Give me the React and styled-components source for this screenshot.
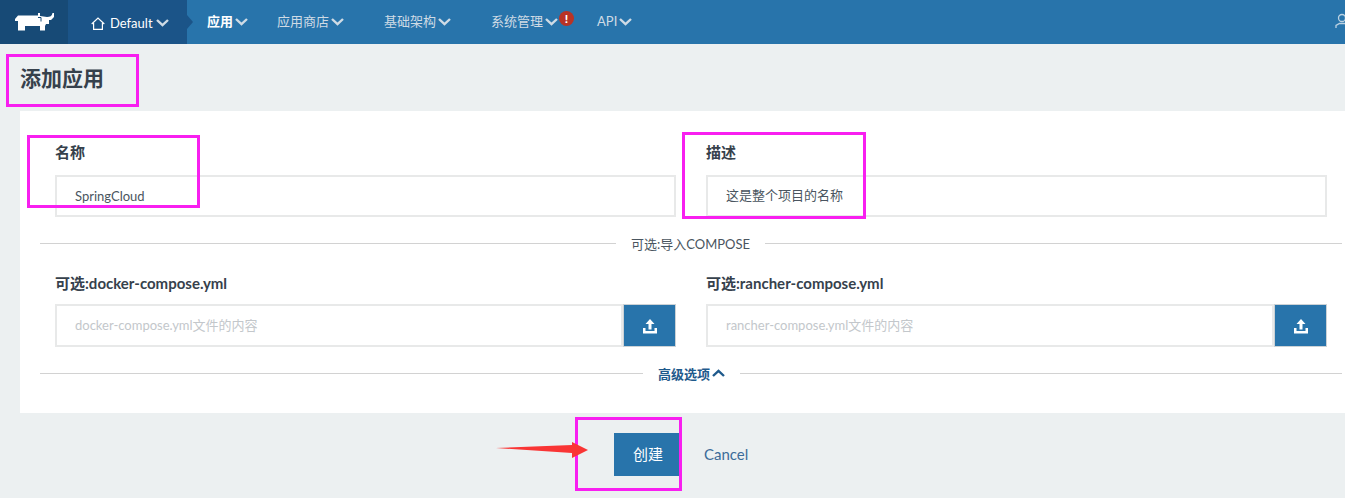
import React from 'react';
import styled, { createGlobalStyle } from 'styled-components';

const FONT = `Lato, "Noto Sans CJK SC", "Liberation Sans", sans-serif`;

const Global = createGlobalStyle`
  html, body { margin: 0; padding: 0; background: #ecf0f1; }
  body { font-family: ${FONT}; color: #3a4652; }
`;

const Page = styled.div`
  position: relative;
  width: 1345px;
  height: 498px;
  overflow: hidden;
  background: #ecf0f1;
`;

const Nav = styled.header`
  display: flex;
  align-items: stretch;
  height: 44px;
  background: #2874ab;
  font-size: 13px;
  color: #cfdbe5;
`;

const LogoCell = styled.div`
  width: 68px;
  display: flex;
  align-items: center;
  justify-content: center;
  background: #174a76;
`;

const EnvCell = styled.div`
  position: relative;
  width: 119px;
  display: flex;
  align-items: center;
  padding: 2px 0 0 23px;
  box-sizing: border-box;
  background: #1b5488;
  color: #fff;
  &::after {
    content: '';
    position: absolute;
    left: 100%;
    top: 15px;
    border-left: 6px solid #1b5488;
    border-top: 7px solid transparent;
    border-bottom: 7px solid transparent;
  }
`;

const EnvName = styled.span`
  margin-left: 5px;
  margin-right: 3px;
`;

const NavItem = styled.div`
  display: flex;
  align-items: center;
  height: 41px;
  margin-left: ${p => p.$gap}px;
  font-weight: ${p => (p.$active ? 700 : 400)};
  color: ${p => (p.$active ? '#fff' : '#cfdbe5')};
`;

const ChevronIcon = styled.svg`
  width: 13px;
  height: 8px;
  margin-left: ${p => p.$gap ?? 2}px;
  margin-top: ${p => p.$drop ?? 0}px;
  flex: none;
  fill: none;
  stroke: ${p => p.$color || '#cfdbe5'};
  stroke-width: 2.4;
`;

const Alert = styled.span`
  width: 15px;
  height: 15px;
  margin-left: 1px;
  margin-top: -4px;
  border-radius: 50%;
  background: #b93325;
  color: #fff;
  font-size: 12px;
  font-weight: 900;
  line-height: 15px;
  text-align: center;
`;

const UserBox = styled.div`
  margin-left: auto;
  margin-right: -6px;
  display: flex;
  align-items: center;
  height: 42px;
`;

const Title = styled.h1`
  margin: 0;
  height: 67px;
  box-sizing: border-box;
  display: flex;
  align-items: center;
  padding: 0 0 2px 20px;
  font-size: 21px;
  font-weight: 700;
  color: #36414c;
`;

const Card = styled.section`
  margin-left: 20px;
  height: 302px;
  box-sizing: border-box;
  padding: 32px 18px 0 35px;
  background: #fff;
`;

const Row = styled.div`
  display: grid;
  grid-template-columns: 621px 621px;
  column-gap: 30px;
`;

const Label = styled.label`
  display: block;
  height: 20px;
  line-height: 18px;
  font-size: 15px;
  font-weight: 700;
  color: #36414c;
  margin-bottom: ${p => (p.$tight ? 10 : 12)}px;
`;

const Input = styled.div`
  height: ${p => (p.$tall ? 43 : 42)}px;
  box-sizing: border-box;
  display: flex;
  align-items: center;
  padding: 0 18px ${p => p.$lift ?? 0}px;
  flex: 1;
  min-width: 0;
  border: 2px solid #e8e9e9;
  font-size: 13px;
  color: ${p => (p.$placeholder ? '#c3c7cb' : '#4a5560')};
`;

const InputGroup = styled.div`
  display: flex;
  height: 43px;
`;

const UploadBtn = styled.div`
  width: 53px;
  height: 43px;
  box-sizing: border-box;
  flex: none;
  display: flex;
  align-items: center;
  justify-content: center;
  background: #2874ab;
  border: 1px solid #ccd2d6;
`;

const Divider = styled.div`
  display: flex;
  align-items: center;
  height: 20px;
  margin: ${p => p.$top}px -15px ${p => p.$bottom}px -15px;
  font-size: 13px;
  color: ${p => (p.$link ? '#1f5a8c' : '#4a5560')};
  font-weight: ${p => (p.$link ? 700 : 400)};
  &::before, &::after {
    content: '';
    flex: 1;
    height: 1px;
    background: #d2d2d2;
  }
  &::before { flex: none; width: ${p => p.$left}px; }
`;

const DividerText = styled.span`
  display: flex;
  align-items: center;
  padding: 0 15px;
`;

const Footer = styled.div`
  display: flex;
  align-items: center;
  margin: 20px 0 0 614px;
  height: 43px;
`;

const CreateBtn = styled.button`
  width: 68px;
  height: 43px;
  border: 0;
  padding: 0 0 2px;
  background: #2874ab;
  color: #fff;
  font: 400 15px ${FONT};
`;

const CancelLink = styled.a`
  margin-left: 22px;
  padding-bottom: 2px;
  font-size: 15px;
  color: #3c6c99;
`;

const Highlight = styled.div`
  position: absolute;
  left: ${p => p.$x}px;
  top: ${p => p.$y}px;
  width: ${p => p.$w}px;
  height: ${p => p.$h}px;
  box-sizing: border-box;
  border: 3px solid #f81ff0;
  pointer-events: none;
`;

const ArrowSvg = styled.svg`
  position: absolute;
  left: 495px;
  top: 438px;
  width: 96px;
  height: 24px;
`;

const Chevron = ({ color, gap, up, drop }) => (
  <ChevronIcon viewBox="0 0 13 8" $color={color} $gap={gap} $drop={drop}>
    <path d={up ? 'M1 7 6.5 1.8 12 7' : 'M1 1 6.5 6.2 12 1'} />
  </ChevronIcon>
);

const Logo = () => (
  <svg width="39" height="18" viewBox="0 0 39 18" fill="#fff">
    <path d="M0 6 3 2.500H23V0H25V3L32 4C35 4 37 3 37.500 0H39V4L36 7H34V11H31L30 13V17.500H25V13H10V17.500H3V8L0 8z" />
    <path d="M23 4.500h3v4" fill="none" stroke="#174a76" strokeWidth="1" />
  </svg>
);

const House = () => (
  <svg width="14" height="13" viewBox="0 0 14 13" fill="none" stroke="#fff" strokeWidth="1.200">
    <path d="M.7 7 7 1l6.300 6M2.600 6v6.300h8.800V6" />
  </svg>
);

const Upload = () => (
  <svg width="16" height="16" viewBox="0 0 16 16" fill="#fff">
    <path d="M8 1 3.500 6h3v5.500h3V6h3z" />
    <path d="M1 10h2.500v3h9v-3H15v5.500H1z" />
  </svg>
);

const User = () => (
  <svg width="16" height="16" viewBox="0 0 16 16" fill="none" stroke="#bcd2e2" strokeWidth="1.300">
    <circle cx="7" cy="5" r="3.500" />
    <path d="M1 15v-2.500l3.500-2h5l3.500 2V15" />
  </svg>
);

const navItems = [
  { label: '应用', gap: 20, active: true },
  { label: '应用商店', gap: 29 },
  { label: '基础架构', gap: 40 },
  { label: '系统管理', gap: 40, alert: true },
  { label: 'API', gap: 23 },
];

export default function App() {
  return (
    <Page>
      <Global />
      <Nav>
        <LogoCell><Logo /></LogoCell>
        <EnvCell>
          <House />
          <EnvName>Default</EnvName>
          <Chevron color="#cfdbe5" gap={0} />
        </EnvCell>
        {navItems.map(item => (
          <NavItem key={item.label} $gap={item.gap} $active={item.active}>
            {item.label}
            <Chevron drop={3} />
            {item.alert && <Alert>!</Alert>}
          </NavItem>
        ))}
        <UserBox><User /></UserBox>
      </Nav>

      <Title>添加应用</Title>

      <Card>
        <Row>
          <div>
            <Label>名称</Label>
            <Input>SpringCloud</Input>
          </div>
          <div>
            <Label>描述</Label>
            <Input $lift={4}>这是整个项目的名称</Input>
          </div>
        </Row>

        <Divider $top={16} $bottom={21} $left={576}>
          <DividerText>可选:导入COMPOSE</DividerText>
        </Divider>

        <Row>
          <div>
            <Label $tight>可选:docker-compose.yml</Label>
            <InputGroup>
              <Input $placeholder $tall $lift={2}>docker-compose.yml文件的内容</Input>
              <UploadBtn><Upload /></UploadBtn>
            </InputGroup>
          </div>
          <div>
            <Label $tight>可选:rancher-compose.yml</Label>
            <InputGroup>
              <Input $placeholder $tall $lift={2}>rancher-compose.yml文件的内容</Input>
              <UploadBtn><Upload /></UploadBtn>
            </InputGroup>
          </div>
        </Row>

        <Divider $top={16} $bottom={0} $left={603} $link>
          <DividerText>
            高级选项
            <Chevron color="#1f5a8c" up />
          </DividerText>
        </Divider>
      </Card>

      <Footer>
        <CreateBtn>创建</CreateBtn>
        <CancelLink>Cancel</CancelLink>
      </Footer>

      <Highlight $x={6} $y={54} $w={133} $h={53} />
      <Highlight $x={27} $y={135} $w={173} $h={73} />
      <Highlight $x={682} $y={132} $w={184} $h={87} />
      <Highlight $x={575} $y={417} $w={107} $h={74} />
      <ArrowSvg viewBox="0 0 96 24">
        <path d="M1 10 77 7V4l16 8-16 8v-5z" fill="#f93535" />
      </ArrowSvg>
    </Page>
  );
}
